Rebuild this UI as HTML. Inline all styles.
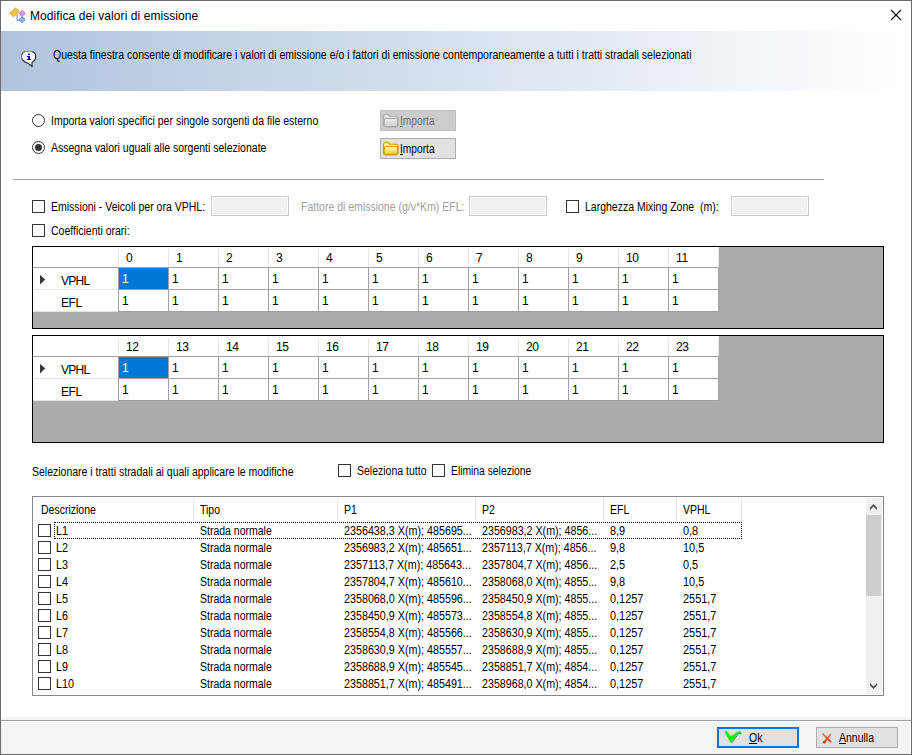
<!DOCTYPE html>
<html><head><meta charset="utf-8"><style>
html,body{margin:0;padding:0;width:912px;height:755px;overflow:hidden;background:#fff}
.b{position:absolute}
.t{position:absolute;white-space:nowrap;font-family:"Liberation Sans",sans-serif;transform-origin:0 0}
u{text-decoration:underline;text-underline-offset:1px;text-decoration-thickness:1px}
</style></head><body>
<div class="b" style="left:0px;top:0px;width:912px;height:755px;box-sizing:border-box;border:1px solid #6b6b6b;background:#fff"></div>
<svg class="b" style="left:9px;top:7px" width="18" height="18" viewBox="0 0 18 18">
<path d="M8.1 7.5 V13.4 H10.5" fill="none" stroke="#6f86a8" stroke-width="1"/>
<path d="M0.9 6.2 L6.5 0.9 L10.1 4.5 L4.5 9.8 Z" fill="#f3c640" stroke="#c8981c" stroke-width="0.9"/>
<path d="M10.1 6.5 L13.4 3.6 L16.2 6.5 L12.9 9.4 Z" fill="#ec94f2" stroke="#b860c8" stroke-width="0.9"/>
<path d="M10.1 12.6 L13.2 9.6 L16.2 12.6 L12.9 15.7 Z" fill="#8fb8f2" stroke="#3f78c8" stroke-width="0.9"/>
</svg>
<div class="t" style="left:30px;top:9px;font-size:12px;line-height:14px;color:#000;letter-spacing:0.07px;">Modifica dei valori di emissione</div>
<svg class="b" style="left:886px;top:5px" width="20" height="20" viewBox="0 0 20 20">
<path d="M5 5 L15 15 M15 5 L5 15" stroke="#000" stroke-width="1.1"/></svg>
<div class="b" style="left:1px;top:31px;width:910px;height:60px;background:linear-gradient(to right,#b0c4de 0%,#ffffff 99%)"></div>
<svg class="b" style="left:20px;top:50px" width="18" height="18" viewBox="0 0 18 18">
<path d="M5.3 1.5 H11.7 L14 2.5 L15.5 4.5 V8.5 L14.5 10.5 L12 12.3 V16.3 L8.5 13.6 L5 12 L2.5 10 L1.6 8 V5 L3 2.6 Z" fill="#fff" stroke="#1a1a1a" stroke-width="1.1"/>
<path d="M2.5 10 L1.6 8 V5 L3 2.6 L5.3 1.5 H11.7 L13.2 2.2" fill="none" stroke="#8a8a8a" stroke-width="1.1"/>
<rect x="7.9" y="3.6" width="2.1" height="1.4" fill="#1010f0"/>
<path d="M6.9 6 H10 V8.9 H11 V10 H6.9 V8.9 H7.9 V6.9 H6.9 Z" fill="#1010f0"/>
</svg>
<div class="t" style="left:53px;top:48px;font-size:12px;line-height:14px;color:#000;transform:scaleX(0.875);">Questa finestra consente di modificare i valori di emissione e/o i fattori di emissione contemporaneamente a tutti i tratti stradali selezionati</div>
<svg class="b" style="left:31px;top:113px" width="15" height="15" viewBox="0 0 15 15"><circle cx="7.5" cy="7.5" r="6" fill="#fff" stroke="#333" stroke-width="1"/></svg>
<svg class="b" style="left:31px;top:140px" width="15" height="15" viewBox="0 0 15 15"><circle cx="7.5" cy="7.5" r="6" fill="#fff" stroke="#333" stroke-width="1"/><circle cx="7.5" cy="7.5" r="3.5" fill="#333"/></svg>
<div class="t" style="left:51px;top:114px;font-size:12px;line-height:14px;color:#000;transform:scaleX(0.875);">Importa valori specifici per singole sorgenti da file esterno</div>
<div class="t" style="left:51px;top:141px;font-size:12px;line-height:14px;color:#000;transform:scaleX(0.875);">Assegna valori uguali alle sorgenti selezionate</div>
<div class="b" style="left:380px;top:110px;width:76px;height:21px;box-sizing:border-box;border:1px solid #bfbfbf;background:#cccccc"></div>
<svg class="b" style="left:382px;top:113px" width="18" height="16" viewBox="0 0 18 16">
<defs><linearGradient id="fg382_113" x1="0" y1="0" x2="0" y2="1"><stop offset="0" stop-color="#ececec"/><stop offset="0.45" stop-color="#dedede"/><stop offset="1" stop-color="#cfcfcf"/></linearGradient></defs>
<path d="M1.5 3.5 Q1.5 1.5 3.5 1.5 H6 L7.5 3.2 H14.5 Q16 3.2 16 4.7 V12 Q16 13.6 14.5 13.6 H3.2 Q1.5 13.6 1.5 12 Z" fill="#e2e2e2" stroke="#a9a9a9" stroke-width="1.1"/>
<path d="M3.5 5.5 H15.5 V12 Q15.5 13.6 14 13.6 H3.2 Q1.8 13.6 2 12 L2.4 7 Q2.6 5.5 3.5 5.5 Z" fill="url(#fg382_113)" stroke="#a9a9a9" stroke-width="1.1"/>
</svg>
<div class="t" style="left:400px;top:114px;font-size:12px;line-height:14px;color:#6d6d6d;transform:scaleX(0.85);"><u>I</u>mporta</div>
<div class="b" style="left:380px;top:138px;width:76px;height:21px;box-sizing:border-box;border:1px solid #adadad;background:#e1e1e1"></div>
<svg class="b" style="left:382px;top:141px" width="18" height="16" viewBox="0 0 18 16">
<defs><linearGradient id="fg382_141" x1="0" y1="0" x2="0" y2="1"><stop offset="0" stop-color="#fffbd0"/><stop offset="0.45" stop-color="#ffe870"/><stop offset="1" stop-color="#f0c020"/></linearGradient></defs>
<path d="M1.5 3.5 Q1.5 1.5 3.5 1.5 H6 L7.5 3.2 H14.5 Q16 3.2 16 4.7 V12 Q16 13.6 14.5 13.6 H3.2 Q1.5 13.6 1.5 12 Z" fill="#fff4a0" stroke="#d09a00" stroke-width="1.1"/>
<path d="M3.5 5.5 H15.5 V12 Q15.5 13.6 14 13.6 H3.2 Q1.8 13.6 2 12 L2.4 7 Q2.6 5.5 3.5 5.5 Z" fill="url(#fg382_141)" stroke="#d09a00" stroke-width="1.1"/>
</svg>
<div class="t" style="left:400px;top:142px;font-size:12px;line-height:14px;color:#000;transform:scaleX(0.85);"><u>I</u>mporta</div>
<div class="b" style="left:13px;top:179px;width:811px;height:1px;background:#a0a0a0"></div>
<div class="b" style="left:32px;top:200px;width:13px;height:13px;box-sizing:border-box;border:1px solid #333;background:#fff"></div>
<div class="t" style="left:51px;top:200px;font-size:12px;line-height:14px;color:#000;transform:scaleX(0.875);">Emissioni - Veicoli per ora VPHL:</div>
<div class="b" style="left:211px;top:196px;width:78px;height:20px;box-sizing:border-box;border:1px solid #c8c8c8;background:#f0f0f0;box-shadow:inset 0 0 0 1px #ffffff"></div>
<div class="t" style="left:301px;top:200px;font-size:12px;line-height:14px;color:#a0a0a0;transform:scaleX(0.875);">Fattore di emissione (g/v*Km) EFL:</div>
<div class="b" style="left:469px;top:196px;width:78px;height:20px;box-sizing:border-box;border:1px solid #c8c8c8;background:#f0f0f0;box-shadow:inset 0 0 0 1px #ffffff"></div>
<div class="b" style="left:566px;top:200px;width:13px;height:13px;box-sizing:border-box;border:1px solid #333;background:#fff"></div>
<div class="t" style="left:585px;top:200px;font-size:12px;line-height:14px;color:#000;transform:scaleX(0.875);">Larghezza Mixing Zone &nbsp;(m):</div>
<div class="b" style="left:731px;top:196px;width:78px;height:20px;box-sizing:border-box;border:1px solid #c8c8c8;background:#f0f0f0;box-shadow:inset 0 0 0 1px #ffffff"></div>
<div class="b" style="left:32px;top:224px;width:13px;height:13px;box-sizing:border-box;border:1px solid #333;background:#fff"></div>
<div class="t" style="left:51px;top:224px;font-size:12px;line-height:14px;color:#000;transform:scaleX(0.875);">Coefficienti orari:</div>
<div class="b" style="left:32px;top:246px;width:852px;height:83px;box-sizing:border-box;border:1px solid #000;background:#ababab"></div>
<div class="b" style="left:33px;top:247px;width:686px;height:20px;background:#fff"></div>
<div class="b" style="left:33px;top:267px;width:686px;height:1px;background:#a0a0a0"></div>
<div class="b" style="left:33px;top:268px;width:686px;height:43px;background:#fff"></div>
<div class="b" style="left:33px;top:289px;width:85px;height:1px;background:#e3e3e3"></div>
<div class="b" style="left:33px;top:311px;width:85px;height:1px;background:#e3e3e3"></div>
<div class="b" style="left:118px;top:289px;width:601px;height:1px;background:#a0a0a0"></div>
<div class="b" style="left:118px;top:311px;width:601px;height:1px;background:#a0a0a0"></div>
<div class="b" style="left:118px;top:249px;width:1px;height:18px;background:#e5e5e5"></div>
<div class="b" style="left:118px;top:268px;width:1px;height:44px;background:#a0a0a0"></div>
<div class="b" style="left:168px;top:249px;width:1px;height:18px;background:#e5e5e5"></div>
<div class="b" style="left:168px;top:268px;width:1px;height:44px;background:#a0a0a0"></div>
<div class="b" style="left:218px;top:249px;width:1px;height:18px;background:#e5e5e5"></div>
<div class="b" style="left:218px;top:268px;width:1px;height:44px;background:#a0a0a0"></div>
<div class="b" style="left:268px;top:249px;width:1px;height:18px;background:#e5e5e5"></div>
<div class="b" style="left:268px;top:268px;width:1px;height:44px;background:#a0a0a0"></div>
<div class="b" style="left:318px;top:249px;width:1px;height:18px;background:#e5e5e5"></div>
<div class="b" style="left:318px;top:268px;width:1px;height:44px;background:#a0a0a0"></div>
<div class="b" style="left:368px;top:249px;width:1px;height:18px;background:#e5e5e5"></div>
<div class="b" style="left:368px;top:268px;width:1px;height:44px;background:#a0a0a0"></div>
<div class="b" style="left:418px;top:249px;width:1px;height:18px;background:#e5e5e5"></div>
<div class="b" style="left:418px;top:268px;width:1px;height:44px;background:#a0a0a0"></div>
<div class="b" style="left:468px;top:249px;width:1px;height:18px;background:#e5e5e5"></div>
<div class="b" style="left:468px;top:268px;width:1px;height:44px;background:#a0a0a0"></div>
<div class="b" style="left:518px;top:249px;width:1px;height:18px;background:#e5e5e5"></div>
<div class="b" style="left:518px;top:268px;width:1px;height:44px;background:#a0a0a0"></div>
<div class="b" style="left:568px;top:249px;width:1px;height:18px;background:#e5e5e5"></div>
<div class="b" style="left:568px;top:268px;width:1px;height:44px;background:#a0a0a0"></div>
<div class="b" style="left:618px;top:249px;width:1px;height:18px;background:#e5e5e5"></div>
<div class="b" style="left:618px;top:268px;width:1px;height:44px;background:#a0a0a0"></div>
<div class="b" style="left:668px;top:249px;width:1px;height:18px;background:#e5e5e5"></div>
<div class="b" style="left:668px;top:268px;width:1px;height:44px;background:#a0a0a0"></div>
<div class="b" style="left:718px;top:249px;width:1px;height:18px;background:#e5e5e5"></div>
<div class="b" style="left:718px;top:268px;width:1px;height:44px;background:#a0a0a0"></div>
<div class="b" style="left:119px;top:268px;width:49px;height:21px;background:#0078d7"></div>
<svg class="b" style="left:39px;top:274px" width="8" height="11" viewBox="0 0 8 11"><path d="M1 0.8 L6.2 5.6 L1 10.4 Z" fill="#383838"/></svg>
<div class="t" style="left:61px;top:274px;font-size:12px;line-height:14px;color:#000;letter-spacing:-0.7px;">VPHL</div>
<div class="t" style="left:61px;top:296px;font-size:12px;line-height:14px;color:#000;letter-spacing:-0.4px;">EFL</div>
<div class="t" style="left:126px;top:251px;font-size:12px;line-height:14px;color:#000;letter-spacing:-0.3px;">0</div>
<div class="t" style="left:122px;top:272px;font-size:12px;line-height:14px;color:#fff;letter-spacing:0px;">1</div>
<div class="t" style="left:122px;top:294px;font-size:12px;line-height:14px;color:#000;letter-spacing:0px;">1</div>
<div class="t" style="left:176px;top:251px;font-size:12px;line-height:14px;color:#000;letter-spacing:-0.3px;">1</div>
<div class="t" style="left:172px;top:272px;font-size:12px;line-height:14px;color:#000;letter-spacing:0px;">1</div>
<div class="t" style="left:172px;top:294px;font-size:12px;line-height:14px;color:#000;letter-spacing:0px;">1</div>
<div class="t" style="left:226px;top:251px;font-size:12px;line-height:14px;color:#000;letter-spacing:-0.3px;">2</div>
<div class="t" style="left:222px;top:272px;font-size:12px;line-height:14px;color:#000;letter-spacing:0px;">1</div>
<div class="t" style="left:222px;top:294px;font-size:12px;line-height:14px;color:#000;letter-spacing:0px;">1</div>
<div class="t" style="left:276px;top:251px;font-size:12px;line-height:14px;color:#000;letter-spacing:-0.3px;">3</div>
<div class="t" style="left:272px;top:272px;font-size:12px;line-height:14px;color:#000;letter-spacing:0px;">1</div>
<div class="t" style="left:272px;top:294px;font-size:12px;line-height:14px;color:#000;letter-spacing:0px;">1</div>
<div class="t" style="left:326px;top:251px;font-size:12px;line-height:14px;color:#000;letter-spacing:-0.3px;">4</div>
<div class="t" style="left:322px;top:272px;font-size:12px;line-height:14px;color:#000;letter-spacing:0px;">1</div>
<div class="t" style="left:322px;top:294px;font-size:12px;line-height:14px;color:#000;letter-spacing:0px;">1</div>
<div class="t" style="left:376px;top:251px;font-size:12px;line-height:14px;color:#000;letter-spacing:-0.3px;">5</div>
<div class="t" style="left:372px;top:272px;font-size:12px;line-height:14px;color:#000;letter-spacing:0px;">1</div>
<div class="t" style="left:372px;top:294px;font-size:12px;line-height:14px;color:#000;letter-spacing:0px;">1</div>
<div class="t" style="left:426px;top:251px;font-size:12px;line-height:14px;color:#000;letter-spacing:-0.3px;">6</div>
<div class="t" style="left:422px;top:272px;font-size:12px;line-height:14px;color:#000;letter-spacing:0px;">1</div>
<div class="t" style="left:422px;top:294px;font-size:12px;line-height:14px;color:#000;letter-spacing:0px;">1</div>
<div class="t" style="left:476px;top:251px;font-size:12px;line-height:14px;color:#000;letter-spacing:-0.3px;">7</div>
<div class="t" style="left:472px;top:272px;font-size:12px;line-height:14px;color:#000;letter-spacing:0px;">1</div>
<div class="t" style="left:472px;top:294px;font-size:12px;line-height:14px;color:#000;letter-spacing:0px;">1</div>
<div class="t" style="left:526px;top:251px;font-size:12px;line-height:14px;color:#000;letter-spacing:-0.3px;">8</div>
<div class="t" style="left:522px;top:272px;font-size:12px;line-height:14px;color:#000;letter-spacing:0px;">1</div>
<div class="t" style="left:522px;top:294px;font-size:12px;line-height:14px;color:#000;letter-spacing:0px;">1</div>
<div class="t" style="left:576px;top:251px;font-size:12px;line-height:14px;color:#000;letter-spacing:-0.3px;">9</div>
<div class="t" style="left:572px;top:272px;font-size:12px;line-height:14px;color:#000;letter-spacing:0px;">1</div>
<div class="t" style="left:572px;top:294px;font-size:12px;line-height:14px;color:#000;letter-spacing:0px;">1</div>
<div class="t" style="left:626px;top:251px;font-size:12px;line-height:14px;color:#000;letter-spacing:-0.3px;">10</div>
<div class="t" style="left:622px;top:272px;font-size:12px;line-height:14px;color:#000;letter-spacing:0px;">1</div>
<div class="t" style="left:622px;top:294px;font-size:12px;line-height:14px;color:#000;letter-spacing:0px;">1</div>
<div class="t" style="left:676px;top:251px;font-size:12px;line-height:14px;color:#000;letter-spacing:-0.3px;">11</div>
<div class="t" style="left:672px;top:272px;font-size:12px;line-height:14px;color:#000;letter-spacing:0px;">1</div>
<div class="t" style="left:672px;top:294px;font-size:12px;line-height:14px;color:#000;letter-spacing:0px;">1</div>
<div class="b" style="left:32px;top:335px;width:852px;height:108px;box-sizing:border-box;border:1px solid #000;background:#ababab"></div>
<div class="b" style="left:33px;top:336px;width:686px;height:20px;background:#fff"></div>
<div class="b" style="left:33px;top:356px;width:686px;height:1px;background:#a0a0a0"></div>
<div class="b" style="left:33px;top:357px;width:686px;height:43px;background:#fff"></div>
<div class="b" style="left:33px;top:378px;width:85px;height:1px;background:#e3e3e3"></div>
<div class="b" style="left:33px;top:400px;width:85px;height:1px;background:#e3e3e3"></div>
<div class="b" style="left:118px;top:378px;width:601px;height:1px;background:#a0a0a0"></div>
<div class="b" style="left:118px;top:400px;width:601px;height:1px;background:#a0a0a0"></div>
<div class="b" style="left:118px;top:338px;width:1px;height:18px;background:#e5e5e5"></div>
<div class="b" style="left:118px;top:357px;width:1px;height:44px;background:#a0a0a0"></div>
<div class="b" style="left:168px;top:338px;width:1px;height:18px;background:#e5e5e5"></div>
<div class="b" style="left:168px;top:357px;width:1px;height:44px;background:#a0a0a0"></div>
<div class="b" style="left:218px;top:338px;width:1px;height:18px;background:#e5e5e5"></div>
<div class="b" style="left:218px;top:357px;width:1px;height:44px;background:#a0a0a0"></div>
<div class="b" style="left:268px;top:338px;width:1px;height:18px;background:#e5e5e5"></div>
<div class="b" style="left:268px;top:357px;width:1px;height:44px;background:#a0a0a0"></div>
<div class="b" style="left:318px;top:338px;width:1px;height:18px;background:#e5e5e5"></div>
<div class="b" style="left:318px;top:357px;width:1px;height:44px;background:#a0a0a0"></div>
<div class="b" style="left:368px;top:338px;width:1px;height:18px;background:#e5e5e5"></div>
<div class="b" style="left:368px;top:357px;width:1px;height:44px;background:#a0a0a0"></div>
<div class="b" style="left:418px;top:338px;width:1px;height:18px;background:#e5e5e5"></div>
<div class="b" style="left:418px;top:357px;width:1px;height:44px;background:#a0a0a0"></div>
<div class="b" style="left:468px;top:338px;width:1px;height:18px;background:#e5e5e5"></div>
<div class="b" style="left:468px;top:357px;width:1px;height:44px;background:#a0a0a0"></div>
<div class="b" style="left:518px;top:338px;width:1px;height:18px;background:#e5e5e5"></div>
<div class="b" style="left:518px;top:357px;width:1px;height:44px;background:#a0a0a0"></div>
<div class="b" style="left:568px;top:338px;width:1px;height:18px;background:#e5e5e5"></div>
<div class="b" style="left:568px;top:357px;width:1px;height:44px;background:#a0a0a0"></div>
<div class="b" style="left:618px;top:338px;width:1px;height:18px;background:#e5e5e5"></div>
<div class="b" style="left:618px;top:357px;width:1px;height:44px;background:#a0a0a0"></div>
<div class="b" style="left:668px;top:338px;width:1px;height:18px;background:#e5e5e5"></div>
<div class="b" style="left:668px;top:357px;width:1px;height:44px;background:#a0a0a0"></div>
<div class="b" style="left:718px;top:338px;width:1px;height:18px;background:#e5e5e5"></div>
<div class="b" style="left:718px;top:357px;width:1px;height:44px;background:#a0a0a0"></div>
<div class="b" style="left:119px;top:357px;width:49px;height:21px;background:#0078d7"></div>
<svg class="b" style="left:39px;top:363px" width="8" height="11" viewBox="0 0 8 11"><path d="M1 0.8 L6.2 5.6 L1 10.4 Z" fill="#383838"/></svg>
<div class="t" style="left:61px;top:363px;font-size:12px;line-height:14px;color:#000;letter-spacing:-0.7px;">VPHL</div>
<div class="t" style="left:61px;top:385px;font-size:12px;line-height:14px;color:#000;letter-spacing:-0.4px;">EFL</div>
<div class="t" style="left:126px;top:340px;font-size:12px;line-height:14px;color:#000;letter-spacing:-0.3px;">12</div>
<div class="t" style="left:122px;top:361px;font-size:12px;line-height:14px;color:#fff;letter-spacing:0px;">1</div>
<div class="t" style="left:122px;top:383px;font-size:12px;line-height:14px;color:#000;letter-spacing:0px;">1</div>
<div class="t" style="left:176px;top:340px;font-size:12px;line-height:14px;color:#000;letter-spacing:-0.3px;">13</div>
<div class="t" style="left:172px;top:361px;font-size:12px;line-height:14px;color:#000;letter-spacing:0px;">1</div>
<div class="t" style="left:172px;top:383px;font-size:12px;line-height:14px;color:#000;letter-spacing:0px;">1</div>
<div class="t" style="left:226px;top:340px;font-size:12px;line-height:14px;color:#000;letter-spacing:-0.3px;">14</div>
<div class="t" style="left:222px;top:361px;font-size:12px;line-height:14px;color:#000;letter-spacing:0px;">1</div>
<div class="t" style="left:222px;top:383px;font-size:12px;line-height:14px;color:#000;letter-spacing:0px;">1</div>
<div class="t" style="left:276px;top:340px;font-size:12px;line-height:14px;color:#000;letter-spacing:-0.3px;">15</div>
<div class="t" style="left:272px;top:361px;font-size:12px;line-height:14px;color:#000;letter-spacing:0px;">1</div>
<div class="t" style="left:272px;top:383px;font-size:12px;line-height:14px;color:#000;letter-spacing:0px;">1</div>
<div class="t" style="left:326px;top:340px;font-size:12px;line-height:14px;color:#000;letter-spacing:-0.3px;">16</div>
<div class="t" style="left:322px;top:361px;font-size:12px;line-height:14px;color:#000;letter-spacing:0px;">1</div>
<div class="t" style="left:322px;top:383px;font-size:12px;line-height:14px;color:#000;letter-spacing:0px;">1</div>
<div class="t" style="left:376px;top:340px;font-size:12px;line-height:14px;color:#000;letter-spacing:-0.3px;">17</div>
<div class="t" style="left:372px;top:361px;font-size:12px;line-height:14px;color:#000;letter-spacing:0px;">1</div>
<div class="t" style="left:372px;top:383px;font-size:12px;line-height:14px;color:#000;letter-spacing:0px;">1</div>
<div class="t" style="left:426px;top:340px;font-size:12px;line-height:14px;color:#000;letter-spacing:-0.3px;">18</div>
<div class="t" style="left:422px;top:361px;font-size:12px;line-height:14px;color:#000;letter-spacing:0px;">1</div>
<div class="t" style="left:422px;top:383px;font-size:12px;line-height:14px;color:#000;letter-spacing:0px;">1</div>
<div class="t" style="left:476px;top:340px;font-size:12px;line-height:14px;color:#000;letter-spacing:-0.3px;">19</div>
<div class="t" style="left:472px;top:361px;font-size:12px;line-height:14px;color:#000;letter-spacing:0px;">1</div>
<div class="t" style="left:472px;top:383px;font-size:12px;line-height:14px;color:#000;letter-spacing:0px;">1</div>
<div class="t" style="left:526px;top:340px;font-size:12px;line-height:14px;color:#000;letter-spacing:-0.3px;">20</div>
<div class="t" style="left:522px;top:361px;font-size:12px;line-height:14px;color:#000;letter-spacing:0px;">1</div>
<div class="t" style="left:522px;top:383px;font-size:12px;line-height:14px;color:#000;letter-spacing:0px;">1</div>
<div class="t" style="left:576px;top:340px;font-size:12px;line-height:14px;color:#000;letter-spacing:-0.3px;">21</div>
<div class="t" style="left:572px;top:361px;font-size:12px;line-height:14px;color:#000;letter-spacing:0px;">1</div>
<div class="t" style="left:572px;top:383px;font-size:12px;line-height:14px;color:#000;letter-spacing:0px;">1</div>
<div class="t" style="left:626px;top:340px;font-size:12px;line-height:14px;color:#000;letter-spacing:-0.3px;">22</div>
<div class="t" style="left:622px;top:361px;font-size:12px;line-height:14px;color:#000;letter-spacing:0px;">1</div>
<div class="t" style="left:622px;top:383px;font-size:12px;line-height:14px;color:#000;letter-spacing:0px;">1</div>
<div class="t" style="left:676px;top:340px;font-size:12px;line-height:14px;color:#000;letter-spacing:-0.3px;">23</div>
<div class="t" style="left:672px;top:361px;font-size:12px;line-height:14px;color:#000;letter-spacing:0px;">1</div>
<div class="t" style="left:672px;top:383px;font-size:12px;line-height:14px;color:#000;letter-spacing:0px;">1</div>
<div class="t" style="left:32px;top:465px;font-size:12px;line-height:14px;color:#000;transform:scaleX(0.875);">Selezionare i tratti stradali ai quali applicare le modifiche</div>
<div class="b" style="left:338px;top:464px;width:13px;height:13px;box-sizing:border-box;border:1px solid #333;background:#fff"></div>
<div class="t" style="left:357px;top:464px;font-size:12px;line-height:14px;color:#000;transform:scaleX(0.875);">Seleziona tutto</div>
<div class="b" style="left:432px;top:464px;width:13px;height:13px;box-sizing:border-box;border:1px solid #333;background:#fff"></div>
<div class="t" style="left:451px;top:464px;font-size:12px;line-height:14px;color:#000;transform:scaleX(0.86);">Elimina selezione</div>
<div class="b" style="left:32px;top:496px;width:852px;height:200px;box-sizing:border-box;border:1px solid #828790;background:#fff"></div>
<div class="b" style="left:193px;top:498px;width:1px;height:23px;background:#e5e5e5"></div>
<div class="b" style="left:337px;top:498px;width:1px;height:23px;background:#e5e5e5"></div>
<div class="b" style="left:475px;top:498px;width:1px;height:23px;background:#e5e5e5"></div>
<div class="b" style="left:603px;top:498px;width:1px;height:23px;background:#e5e5e5"></div>
<div class="b" style="left:676px;top:498px;width:1px;height:23px;background:#e5e5e5"></div>
<div class="b" style="left:741px;top:498px;width:1px;height:23px;background:#e5e5e5"></div>
<div class="t" style="left:41px;top:503px;font-size:12px;line-height:14px;color:#000;transform:scaleX(0.875);">Descrizione</div>
<div class="t" style="left:200px;top:503px;font-size:12px;line-height:14px;color:#000;transform:scaleX(0.875);">Tipo</div>
<div class="t" style="left:344px;top:503px;font-size:12px;line-height:14px;color:#000;transform:scaleX(0.875);">P1</div>
<div class="t" style="left:482px;top:503px;font-size:12px;line-height:14px;color:#000;transform:scaleX(0.875);">P2</div>
<div class="t" style="left:610px;top:503px;font-size:12px;line-height:14px;color:#000;transform:scaleX(0.875);">EFL</div>
<div class="t" style="left:683px;top:503px;font-size:12px;line-height:14px;color:#000;transform:scaleX(0.875);">VPHL</div>
<div class="b" style="left:38px;top:524px;width:13px;height:13px;box-sizing:border-box;border:1px solid #333;background:#fff"></div>
<div class="t" style="left:56px;top:524px;font-size:12px;line-height:14px;color:#000;transform:scaleX(0.9);">L1</div>
<div class="t" style="left:200px;top:524px;font-size:12px;line-height:14px;color:#000;transform:scaleX(0.875);">Strada normale</div>
<div class="t" style="left:344px;top:524px;font-size:12px;line-height:14px;color:#000;transform:scaleX(0.895);">2356438,3 X(m); 485695...</div>
<div class="t" style="left:482px;top:524px;font-size:12px;line-height:14px;color:#000;transform:scaleX(0.89);">2356983,2 X(m); 4856...</div>
<div class="t" style="left:610px;top:524px;font-size:12px;line-height:14px;color:#000;transform:scaleX(0.91);">8,9</div>
<div class="t" style="left:683px;top:524px;font-size:12px;line-height:14px;color:#000;transform:scaleX(0.91);">0,8</div>
<div class="b" style="left:38px;top:541px;width:13px;height:13px;box-sizing:border-box;border:1px solid #333;background:#fff"></div>
<div class="t" style="left:56px;top:541px;font-size:12px;line-height:14px;color:#000;transform:scaleX(0.9);">L2</div>
<div class="t" style="left:200px;top:541px;font-size:12px;line-height:14px;color:#000;transform:scaleX(0.875);">Strada normale</div>
<div class="t" style="left:344px;top:541px;font-size:12px;line-height:14px;color:#000;transform:scaleX(0.895);">2356983,2 X(m); 485651...</div>
<div class="t" style="left:482px;top:541px;font-size:12px;line-height:14px;color:#000;transform:scaleX(0.89);">2357113,7 X(m); 4856...</div>
<div class="t" style="left:610px;top:541px;font-size:12px;line-height:14px;color:#000;transform:scaleX(0.91);">9,8</div>
<div class="t" style="left:683px;top:541px;font-size:12px;line-height:14px;color:#000;transform:scaleX(0.91);">10,5</div>
<div class="b" style="left:38px;top:558px;width:13px;height:13px;box-sizing:border-box;border:1px solid #333;background:#fff"></div>
<div class="t" style="left:56px;top:558px;font-size:12px;line-height:14px;color:#000;transform:scaleX(0.9);">L3</div>
<div class="t" style="left:200px;top:558px;font-size:12px;line-height:14px;color:#000;transform:scaleX(0.875);">Strada normale</div>
<div class="t" style="left:344px;top:558px;font-size:12px;line-height:14px;color:#000;transform:scaleX(0.895);">2357113,7 X(m); 485643...</div>
<div class="t" style="left:482px;top:558px;font-size:12px;line-height:14px;color:#000;transform:scaleX(0.89);">2357804,7 X(m); 4856...</div>
<div class="t" style="left:610px;top:558px;font-size:12px;line-height:14px;color:#000;transform:scaleX(0.91);">2,5</div>
<div class="t" style="left:683px;top:558px;font-size:12px;line-height:14px;color:#000;transform:scaleX(0.91);">0,5</div>
<div class="b" style="left:38px;top:575px;width:13px;height:13px;box-sizing:border-box;border:1px solid #333;background:#fff"></div>
<div class="t" style="left:56px;top:575px;font-size:12px;line-height:14px;color:#000;transform:scaleX(0.9);">L4</div>
<div class="t" style="left:200px;top:575px;font-size:12px;line-height:14px;color:#000;transform:scaleX(0.875);">Strada normale</div>
<div class="t" style="left:344px;top:575px;font-size:12px;line-height:14px;color:#000;transform:scaleX(0.895);">2357804,7 X(m); 485610...</div>
<div class="t" style="left:482px;top:575px;font-size:12px;line-height:14px;color:#000;transform:scaleX(0.89);">2358068,0 X(m); 4855...</div>
<div class="t" style="left:610px;top:575px;font-size:12px;line-height:14px;color:#000;transform:scaleX(0.91);">9,8</div>
<div class="t" style="left:683px;top:575px;font-size:12px;line-height:14px;color:#000;transform:scaleX(0.91);">10,5</div>
<div class="b" style="left:38px;top:592px;width:13px;height:13px;box-sizing:border-box;border:1px solid #333;background:#fff"></div>
<div class="t" style="left:56px;top:592px;font-size:12px;line-height:14px;color:#000;transform:scaleX(0.9);">L5</div>
<div class="t" style="left:200px;top:592px;font-size:12px;line-height:14px;color:#000;transform:scaleX(0.875);">Strada normale</div>
<div class="t" style="left:344px;top:592px;font-size:12px;line-height:14px;color:#000;transform:scaleX(0.895);">2358068,0 X(m); 485596...</div>
<div class="t" style="left:482px;top:592px;font-size:12px;line-height:14px;color:#000;transform:scaleX(0.89);">2358450,9 X(m); 4855...</div>
<div class="t" style="left:610px;top:592px;font-size:12px;line-height:14px;color:#000;transform:scaleX(0.91);">0,1257</div>
<div class="t" style="left:683px;top:592px;font-size:12px;line-height:14px;color:#000;transform:scaleX(0.91);">2551,7</div>
<div class="b" style="left:38px;top:609px;width:13px;height:13px;box-sizing:border-box;border:1px solid #333;background:#fff"></div>
<div class="t" style="left:56px;top:609px;font-size:12px;line-height:14px;color:#000;transform:scaleX(0.9);">L6</div>
<div class="t" style="left:200px;top:609px;font-size:12px;line-height:14px;color:#000;transform:scaleX(0.875);">Strada normale</div>
<div class="t" style="left:344px;top:609px;font-size:12px;line-height:14px;color:#000;transform:scaleX(0.895);">2358450,9 X(m); 485573...</div>
<div class="t" style="left:482px;top:609px;font-size:12px;line-height:14px;color:#000;transform:scaleX(0.89);">2358554,8 X(m); 4855...</div>
<div class="t" style="left:610px;top:609px;font-size:12px;line-height:14px;color:#000;transform:scaleX(0.91);">0,1257</div>
<div class="t" style="left:683px;top:609px;font-size:12px;line-height:14px;color:#000;transform:scaleX(0.91);">2551,7</div>
<div class="b" style="left:38px;top:626px;width:13px;height:13px;box-sizing:border-box;border:1px solid #333;background:#fff"></div>
<div class="t" style="left:56px;top:626px;font-size:12px;line-height:14px;color:#000;transform:scaleX(0.9);">L7</div>
<div class="t" style="left:200px;top:626px;font-size:12px;line-height:14px;color:#000;transform:scaleX(0.875);">Strada normale</div>
<div class="t" style="left:344px;top:626px;font-size:12px;line-height:14px;color:#000;transform:scaleX(0.895);">2358554,8 X(m); 485566...</div>
<div class="t" style="left:482px;top:626px;font-size:12px;line-height:14px;color:#000;transform:scaleX(0.89);">2358630,9 X(m); 4855...</div>
<div class="t" style="left:610px;top:626px;font-size:12px;line-height:14px;color:#000;transform:scaleX(0.91);">0,1257</div>
<div class="t" style="left:683px;top:626px;font-size:12px;line-height:14px;color:#000;transform:scaleX(0.91);">2551,7</div>
<div class="b" style="left:38px;top:643px;width:13px;height:13px;box-sizing:border-box;border:1px solid #333;background:#fff"></div>
<div class="t" style="left:56px;top:643px;font-size:12px;line-height:14px;color:#000;transform:scaleX(0.9);">L8</div>
<div class="t" style="left:200px;top:643px;font-size:12px;line-height:14px;color:#000;transform:scaleX(0.875);">Strada normale</div>
<div class="t" style="left:344px;top:643px;font-size:12px;line-height:14px;color:#000;transform:scaleX(0.895);">2358630,9 X(m); 485557...</div>
<div class="t" style="left:482px;top:643px;font-size:12px;line-height:14px;color:#000;transform:scaleX(0.89);">2358688,9 X(m); 4855...</div>
<div class="t" style="left:610px;top:643px;font-size:12px;line-height:14px;color:#000;transform:scaleX(0.91);">0,1257</div>
<div class="t" style="left:683px;top:643px;font-size:12px;line-height:14px;color:#000;transform:scaleX(0.91);">2551,7</div>
<div class="b" style="left:38px;top:660px;width:13px;height:13px;box-sizing:border-box;border:1px solid #333;background:#fff"></div>
<div class="t" style="left:56px;top:660px;font-size:12px;line-height:14px;color:#000;transform:scaleX(0.9);">L9</div>
<div class="t" style="left:200px;top:660px;font-size:12px;line-height:14px;color:#000;transform:scaleX(0.875);">Strada normale</div>
<div class="t" style="left:344px;top:660px;font-size:12px;line-height:14px;color:#000;transform:scaleX(0.895);">2358688,9 X(m); 485545...</div>
<div class="t" style="left:482px;top:660px;font-size:12px;line-height:14px;color:#000;transform:scaleX(0.89);">2358851,7 X(m); 4854...</div>
<div class="t" style="left:610px;top:660px;font-size:12px;line-height:14px;color:#000;transform:scaleX(0.91);">0,1257</div>
<div class="t" style="left:683px;top:660px;font-size:12px;line-height:14px;color:#000;transform:scaleX(0.91);">2551,7</div>
<div class="b" style="left:38px;top:677px;width:13px;height:13px;box-sizing:border-box;border:1px solid #333;background:#fff"></div>
<div class="t" style="left:56px;top:677px;font-size:12px;line-height:14px;color:#000;transform:scaleX(0.9);">L10</div>
<div class="t" style="left:200px;top:677px;font-size:12px;line-height:14px;color:#000;transform:scaleX(0.875);">Strada normale</div>
<div class="t" style="left:344px;top:677px;font-size:12px;line-height:14px;color:#000;transform:scaleX(0.895);">2358851,7 X(m); 485491...</div>
<div class="t" style="left:482px;top:677px;font-size:12px;line-height:14px;color:#000;transform:scaleX(0.89);">2358968,0 X(m); 4854...</div>
<div class="t" style="left:610px;top:677px;font-size:12px;line-height:14px;color:#000;transform:scaleX(0.91);">0,1257</div>
<div class="t" style="left:683px;top:677px;font-size:12px;line-height:14px;color:#000;transform:scaleX(0.91);">2551,7</div>
<div class="b" style="left:54px;top:522px;width:688px;height:17px;box-sizing:border-box;border:1px dotted #000"></div>
<div class="b" style="left:866px;top:498px;width:16px;height:196px;background:#f0f0f0"></div>
<div class="b" style="left:866px;top:515px;width:15px;height:81px;background:#cdcdcd"></div>
<svg class="b" style="left:866px;top:500px" width="16" height="14" viewBox="0 0 16 14"><path d="M4 7.5 L7.5 4 L11 7.5 L11 10 L7.5 6.5 L4 10 Z" fill="#505050"/></svg>
<svg class="b" style="left:866px;top:679px" width="16" height="14" viewBox="0 0 16 14"><path d="M4 4 L7.5 7.5 L11 4 L11 6.5 L7.5 10 L4 6.5 Z" fill="#505050"/></svg>
<div class="b" style="left:1px;top:717px;width:910px;height:3px;background:#f4f4f4"></div>
<div class="b" style="left:1px;top:720px;width:910px;height:1px;background:#a0a0a0"></div>
<div class="b" style="left:1px;top:721px;width:909px;height:33px;background:#f4f4f4;box-shadow:inset 0 1px 0 #fff"></div>
<div class="b" style="left:717px;top:727px;width:82px;height:21px;box-sizing:border-box;border:2px solid #0078d7;background:#e1e1e1"></div>
<svg class="b" style="left:720px;top:726px" width="24" height="20" viewBox="0 0 24 20"><path d="M11.6 17 L18.5 7.6 L21.8 7.2" fill="none" stroke="#6a6a6a" stroke-width="1"/><path d="M4.5 5.6 L6.6 4.8 L10.9 10.3 L16.5 6.4 L18.5 5.4 L21 5.6 L21 6.6 L18.2 6.9 L11.8 16 L11 16.8 L10.4 16.3 L7.2 10.8 Z" fill="#00f000"/></svg>
<div class="t" style="left:749px;top:731px;font-size:12px;line-height:14px;color:#000;transform:scaleX(0.875);"><u>O</u>k</div>
<div class="b" style="left:816px;top:727px;width:82px;height:21px;box-sizing:border-box;border:1px solid #adadad;background:#e1e1e1"></div>
<svg class="b" style="left:821px;top:731px" width="13" height="14" viewBox="0 0 13 14"><defs><linearGradient id="xg" x1="0" y1="0" x2="0" y2="1"><stop offset="0" stop-color="#ff7a50"/><stop offset="1" stop-color="#e83010"/></linearGradient></defs><path d="M1.8 2.8 L9.6 10.6 M9.5 3.4 L3.4 11.2" stroke="url(#xg)" stroke-width="1.7" stroke-linecap="round"/><circle cx="3.3" cy="11" r="1.5" fill="#f02808"/></svg>
<div class="t" style="left:839px;top:731px;font-size:12px;line-height:14px;color:#000;transform:scaleX(0.875);"><u>A</u>nnulla</div>
</body></html>
